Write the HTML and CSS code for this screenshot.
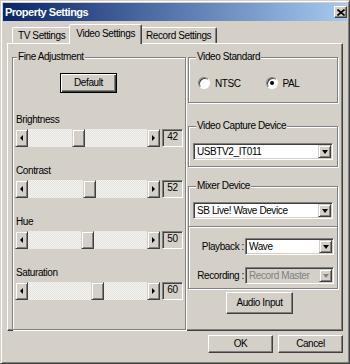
FILE: index.html
```html
<!DOCTYPE html>
<html lang="en">
<head>
  <meta charset="UTF-8">
  <title>Property Settings</title>
  <link rel="stylesheet" href="styles.css">
</head>
<body>
  <div class="window">
    <!-- title bar -->
    <div class="titlebar">
      <span class="title">Property Settings</span>
      <span class="close">
        <svg width="8" height="7" viewBox="0 0 8 7"><path d="M0.5 0.5 L7.5 6.5 M7.5 0.5 L0.5 6.5" stroke="#000" stroke-width="1.6"/></svg>
      </span>
    </div>

    <!-- tabs -->
    <div class="tabs">
      <div class="tab">TV Settings</div>
      <div class="tab active">Video Settings</div>
      <div class="tab">Record Settings</div>
    </div>

    <div class="panel">
      <!-- left: sliders -->
      <fieldset class="group fine">
        <legend>Fine Adjustment</legend>
        <div class="btn default-btn">Default</div>

        <div class="slider-row">
          <div class="slider-label">Brightness</div>
          <div class="slider">
            <div class="scroll">
              <span class="arrow"><i class="tri-left"></i></span>
              <div class="track"><div class="thumb" style="margin-left:44px"></div></div>
              <span class="arrow"><i class="tri-right"></i></span>
            </div>
            <div class="value">42</div>
          </div>
        </div>

        <div class="slider-row">
          <div class="slider-label">Contrast</div>
          <div class="slider">
            <div class="scroll">
              <span class="arrow"><i class="tri-left"></i></span>
              <div class="track"><div class="thumb" style="margin-left:55px"></div></div>
              <span class="arrow"><i class="tri-right"></i></span>
            </div>
            <div class="value">52</div>
          </div>
        </div>

        <div class="slider-row">
          <div class="slider-label">Hue</div>
          <div class="slider">
            <div class="scroll">
              <span class="arrow"><i class="tri-left"></i></span>
              <div class="track"><div class="thumb" style="margin-left:53px"></div></div>
              <span class="arrow"><i class="tri-right"></i></span>
            </div>
            <div class="value">50</div>
          </div>
        </div>

        <div class="slider-row">
          <div class="slider-label">Saturation</div>
          <div class="slider">
            <div class="scroll">
              <span class="arrow"><i class="tri-left"></i></span>
              <div class="track"><div class="thumb" style="margin-left:63px"></div></div>
              <span class="arrow"><i class="tri-right"></i></span>
            </div>
            <div class="value">60</div>
          </div>
        </div>
      </fieldset>

      <!-- right column -->
      <div class="right-col">
        <fieldset class="group standard">
          <legend>Video Standard</legend>
          <div class="radios">
            <div class="radio"><span class="dot"></span>NTSC</div>
            <div class="radio"><span class="dot checked"></span>PAL</div>
          </div>
        </fieldset>

        <fieldset class="group capture">
          <legend>Video Capture Device</legend>
          <div class="select"><span class="select-text">USBTV2_IT011</span><span class="drop"><i class="tri-down"></i></span></div>
        </fieldset>

        <fieldset class="group mixer">
          <legend>Mixer Device</legend>
          <div class="select"><span class="select-text">SB Live! Wave Device</span><span class="drop"><i class="tri-down"></i></span></div>
          <div class="sub">
            <div class="field-row">
              <span class="field-label">Playback :</span>
              <div class="select"><span class="select-text">Wave</span><span class="drop"><i class="tri-down"></i></span></div>
            </div>
            <div class="field-row">
              <span class="field-label">Recording :</span>
              <div class="select disabled"><span class="select-text">Record Master</span><span class="drop"><i class="tri-down"></i></span></div>
            </div>
          </div>
        </fieldset>

        <div class="btn audio-btn">Audio Input</div>
      </div>
    </div>

    <div class="actions">
      <div class="btn">OK</div>
      <div class="btn">Cancel</div>
    </div>
  </div>
</body>
</html>
```

FILE: styles.css
```css
* {
  box-sizing: border-box;
}

body {
  margin: 0;
  background: #d4d0c8;
  font-family: 'Liberation Sans', Arial, sans-serif;
  font-size: 10px;
  letter-spacing: -0.4px;
  color: #000;
}

.window {
  width: 350px;
  height: 364px;
  background: #d4d0c8;
  border: 1px solid;
  border-color: #d4d0c8 #404040 #404040 #d4d0c8;
  box-shadow: inset 1px 1px #fff, inset -1px -1px #808080;
  padding: 2px;
  display: flex;
  flex-direction: column;
}

/* title bar */
.titlebar {
  height: 18px;
  display: flex;
  align-items: center;
  justify-content: space-between;
  padding: 0 0 0 2px;
  background: linear-gradient(to right, #0a246a, #a6caf0);
}

.title {
  color: #fff;
  font-weight: bold;
  font-size: 11px;
  letter-spacing: -0.5px;
}

.close {
  width: 13px;
  height: 12px;
  display: flex;
  align-items: center;
  justify-content: center;
  background: #d4d0c8;
  border: 1px solid;
  border-color: #fff #404040 #404040 #fff;
  box-shadow: inset -1px -1px #808080;
}

/* tabs */
.tabs {
  height: 22px;
  display: flex;
  align-items: flex-end;
  padding-left: 9px;
}

.tab {
  height: 16px;
  line-height: 16px;
  padding: 0 5px;
  border: 1px solid;
  border-bottom: none;
  border-color: #fff #404040 transparent #fff;
  border-radius: 2px 2px 0 0;
  box-shadow: inset -1px 0 #808080;
  background: #d4d0c8;
}

.tab.active {
  height: 20px;
  margin: 0 -2px -1px;
  padding: 0 6px;
  line-height: 17px;
  position: relative;
  z-index: 1;
}

/* tab page */
.panel {
  margin-left: 4px;
  width: 336px;
  height: 288px;
  display: flex;
  gap: 2px;
  padding: 7px 0 0 4px;
  border: 1px solid;
  border-color: #fff #404040 #404040 #fff;
  box-shadow: inset -1px -1px #808080;
}

/* group boxes */
.group {
  margin: 0;
  padding: 0 4px;
  min-width: 0;
  border: 1px solid #808080;
  box-shadow: inset 1px 1px #fff, 1px 1px #fff;
}

.group legend {
  margin-left: 3px;
  padding: 0 1px;
  line-height: 12px;
  background: #d4d0c8;
}

.fine {
  width: 174px;
  padding: 0 2px 16px;
}

.fine legend {
  margin-left: 2px;
}

.right-col {
  width: 150px;
  display: flex;
  flex-direction: column;
}

/* buttons */
.btn {
  height: 18px;
  width: 65px;
  line-height: 16px;
  text-align: center;
  border: 1px solid;
  border-color: #fff #404040 #404040 #fff;
  box-shadow: inset -1px -1px #808080;
}

.default-btn {
  width: 57px;
  height: 20px;
  margin: 10px 0 0 45px;
  line-height: 17px;
  border: 1px solid #000;
  box-shadow: inset 1px 1px #fff, inset -1px -1px #404040, inset -2px -2px #808080;
}

.audio-btn {
  width: 67px;
  height: 22px;
  line-height: 20px;
  margin: 3px 0 0 38px;
}

/* sliders */
.slider-row {
  margin-top: 18px;
}

.default-btn + .slider-row {
  margin-top: 21px;
}

.slider-label {
  line-height: 12px;
  margin: 0 0 3px 1px;
}

.slider {
  display: flex;
  gap: 2px;
  height: 18px;
}

.scroll {
  width: 145px;
  display: flex;
}

.arrow {
  width: 13px;
  display: flex;
  align-items: center;
  justify-content: center;
  border: 1px solid;
  border-color: #d4d0c8 #404040 #404040 #d4d0c8;
  box-shadow: inset 1px 1px #fff, inset -1px -1px #808080;
}

.track {
  flex: 1;
  background-color: #e3e2dd;
  background-image: conic-gradient(#f4f3f0 25%, transparent 0 50%, #f4f3f0 0 75%, transparent 0);
  background-size: 2px 2px;
}

.thumb {
  width: 13px;
  height: 100%;
  background: #d4d0c8;
  border: 1px solid;
  border-color: #d4d0c8 #404040 #404040 #d4d0c8;
  box-shadow: inset 1px 1px #fff, inset -1px -1px #808080;
}

.value {
  width: 21px;
  line-height: 14px;
  text-align: center;
  border: 1px solid;
  border-color: #808080 #fff #fff #808080;
  box-shadow: inset 1px 1px #404040;
}

.tri-left, .tri-right, .tri-down {
  width: 0;
  height: 0;
  border: 3px solid transparent;
}

.tri-left {
  border-right: 3px solid #000;
  border-left-width: 0;
}

.tri-right {
  border-left: 3px solid #000;
  border-right-width: 0;
}

.tri-down {
  border: 3.5px solid transparent;
  border-top: 4px solid #000;
  border-bottom-width: 0;
}

/* radios */
.radios {
  display: flex;
  margin: 14px 0 13px 5px;
  height: 12px;
}

.radio {
  display: flex;
  align-items: center;
  gap: 5px;
  width: 76px;
}

.dot {
  width: 12px;
  height: 12px;
  border-radius: 50%;
  background: #fff;
  border: 1px solid;
  border-color: #808080 #fff #fff #808080;
  box-shadow: inset 1px 1px #404040;
  display: flex;
  align-items: center;
  justify-content: center;
}

.dot.checked::after {
  content: "";
  width: 4px;
  height: 4px;
  border-radius: 50%;
  background: #000;
}

/* dropdowns */
.capture {
  margin-top: 17px;
  padding-bottom: 6px;
}

.capture .select {
  margin-top: 11px;
}

.mixer {
  margin-top: 13px;
  padding-bottom: 4px;
}

.mixer > .select {
  margin-top: 10px;
}

.select {
  height: 17px;
  display: flex;
  align-items: stretch;
  background: #fff;
  border: 1px solid;
  border-color: #808080 #fff #fff #808080;
  box-shadow: inset 1px 1px #404040, inset -1px -1px #d4d0c8;
  padding: 2px 1px 1px 2px;
}

.select-text {
  flex: 1;
  line-height: 12px;
  padding-left: 1px;
}

.drop {
  width: 13px;
  display: flex;
  align-items: center;
  justify-content: center;
  background: #d4d0c8;
  border: 1px solid;
  border-color: #d4d0c8 #404040 #404040 #d4d0c8;
  box-shadow: inset 1px 1px #fff, inset -1px -1px #808080;
  margin: -1px 0 0;
}

.select.disabled {
  background: #d4d0c8;
}

.select.disabled .select-text {
  color: #808080;
}

.select.disabled .tri-down {
  border-top-color: #808080;
}

.sub {
  margin: 7px -4px 0;
  padding: 0 3px 0 4px;
  border-top: 1px solid #808080;
  box-shadow: inset 0 1px #fff;
}

.field-row {
  display: flex;
  align-items: center;
  margin-top: 11px;
}

.field-row + .field-row {
  margin-top: 12px;
}

.field-label {
  width: 52px;
  text-align: right;
  padding-right: 1px;
}

.field-row .select {
  flex: 1;
}

/* dialog buttons */
.actions {
  display: flex;
  justify-content: flex-end;
  gap: 5px;
  margin-top: 4px;
  padding-right: 4px;
}
```
